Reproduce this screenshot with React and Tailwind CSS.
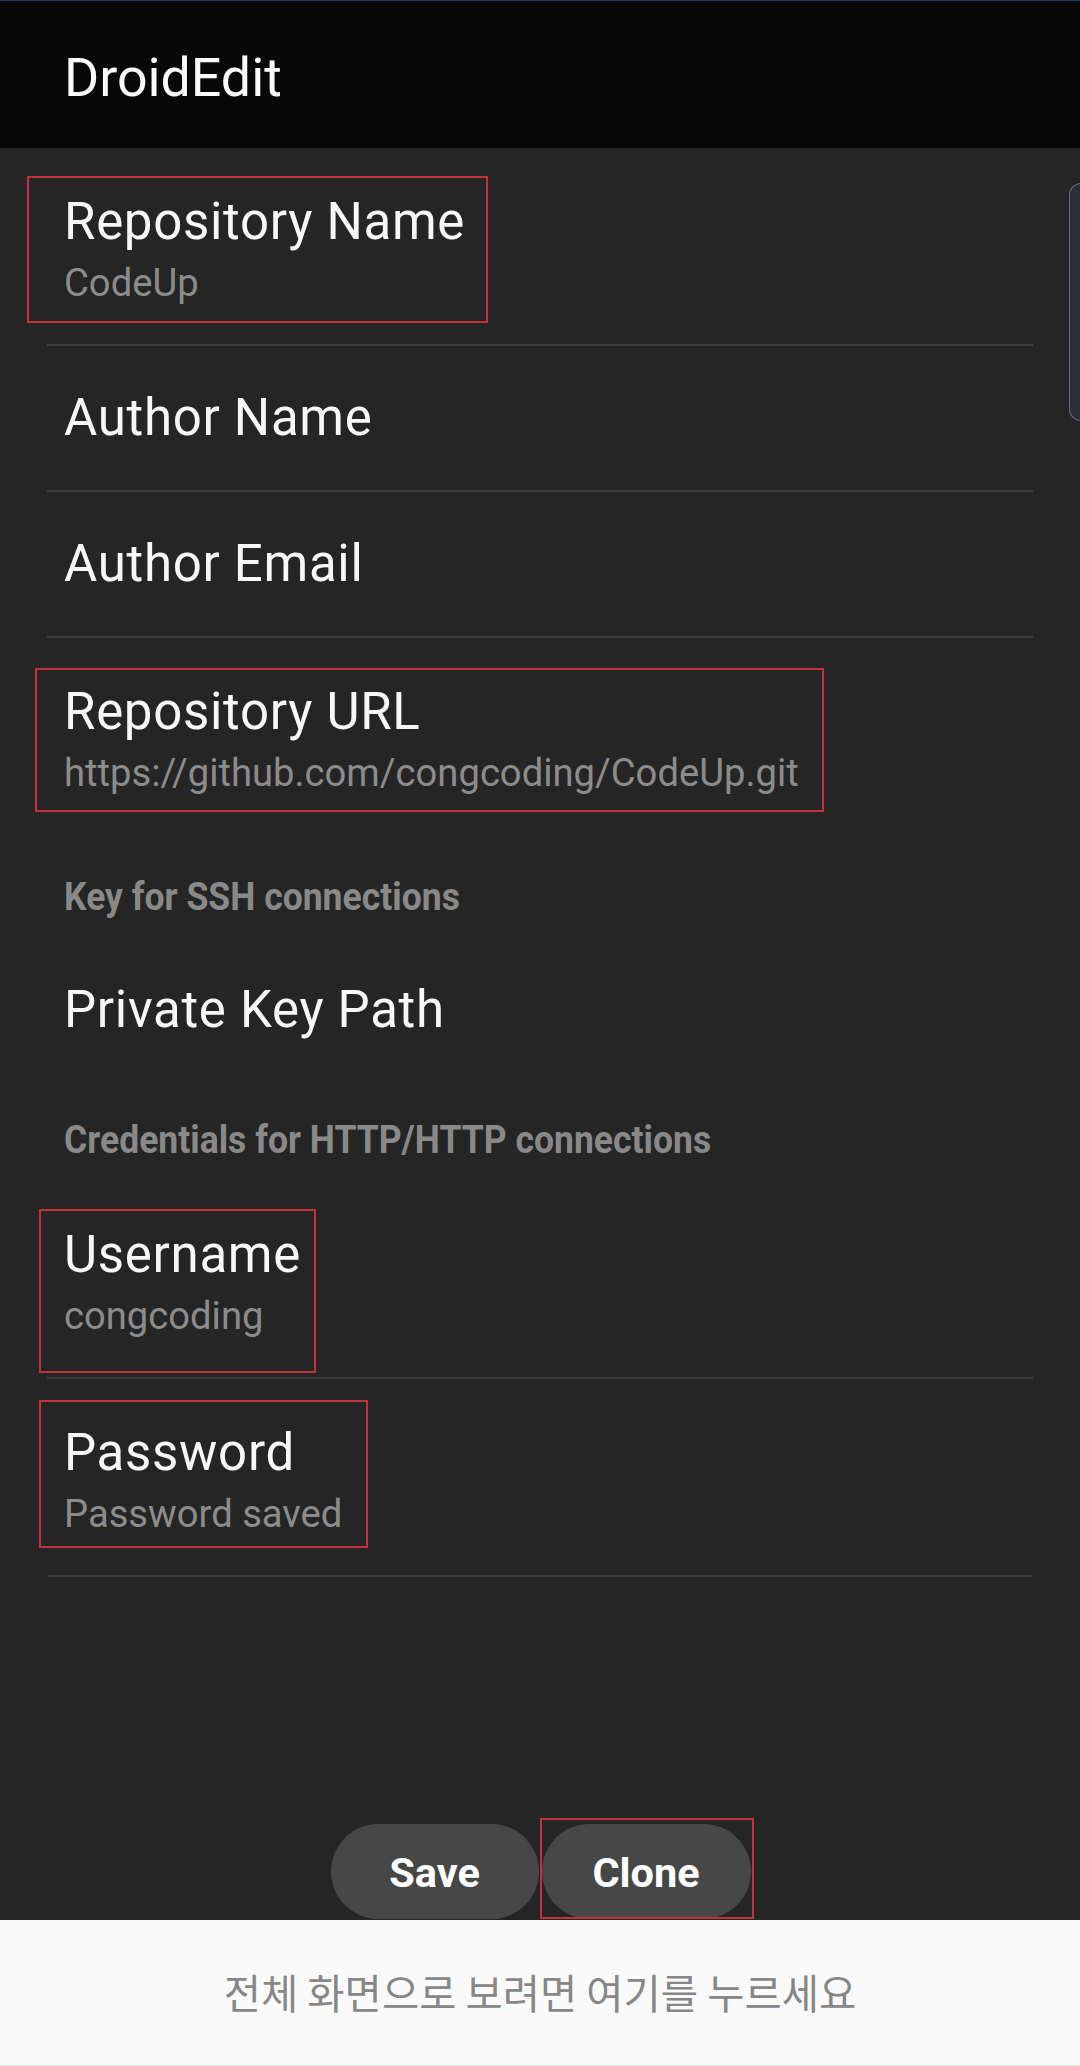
const ROBOTO = { fontFamily: 'Roboto, "Noto Sans", sans-serif' };

function Mark({ className }) {
    return <div className={`absolute border-2 border-[#c3323b] pointer-events-none ${className}`} />;
}

function Divider() {
    return <div className="mx-[47px] h-[2px] bg-[#3d3d3d]" />;
}

function Pref({ title, summary, mark, height }) {
    return (
        <div className={`relative px-[64px] ${height} ${summary ? 'pt-[45px]' : 'flex items-center'}`}>
            {mark}
            <div>
                <p className="text-[51px] leading-[58px] tracking-[0.7px] text-[#f7f7f7]">{title}</p>
                {summary && <p className="mt-[10px] text-[38.2px] leading-[45px] text-[#8c8c8c]">{summary}</p>}
            </div>
        </div>
    );
}

function Category({ label, className }) {
    return (
        <div className={`px-[64px] ${className}`}>
            <span className="inline-block origin-left scale-x-[0.923] text-[38.5px] leading-[45px] font-bold text-[#898989] whitespace-nowrap">
                {label}
            </span>
        </div>
    );
}

export default function App() {
    return (
        <div className="relative w-[1080px] h-[2066px] flex flex-col bg-[#252525] overflow-hidden" style={ROBOTO}>
            <header className="h-[148px] shrink-0 bg-[#080808] border-t border-[#213c66] pl-[64px] pt-[50px]">
                <h1 className="text-[53.7px] leading-[54px] text-[#fafafa]">DroidEdit</h1>
            </header>

            {/* scroll indicator on the right edge */}
            <div className="absolute left-[1069px] top-[183px] w-[24px] h-[238px] rounded-l-[12px] border border-r-0 border-[#6c6c78] bg-[#2e2e3b]" />

            <main className="flex-1 flex flex-col">
                <Pref
                    title="Repository Name"
                    summary="CodeUp"
                    height="h-[196px]"
                    mark={<Mark className="left-[27px] top-[28px] w-[461px] h-[147px]" />}
                />
                <Divider />
                <Pref title="Author Name" height="h-[144px]" />
                <Divider />
                <Pref title="Author Email" height="h-[144px]" />
                <Divider />
                <Pref
                    title="Repository URL"
                    summary="https://github.com/congcoding/CodeUp.git"
                    height="h-[196px]"
                    mark={<Mark className="left-[35px] top-[30px] w-[789px] h-[144px]" />}
                />
                <Category label="Key for SSH connections" className="h-[104px] pt-[40px]" />
                <Pref title="Private Key Path" height="h-[144px]" />
                <Category label="Credentials for HTTP/HTTP connections" className="h-[99px] pt-[35px]" />
                <Pref
                    title="Username"
                    summary="congcoding"
                    height="h-[196px]"
                    mark={<Mark className="left-[39px] top-[28px] w-[277px] h-[164px]" />}
                />
                <Divider />
                <Pref
                    title="Password"
                    summary="Password saved"
                    height="h-[196px]"
                    mark={<Mark className="left-[39px] top-[21px] w-[329px] h-[148px]" />}
                />
                <Divider />

                <div className="mt-auto flex justify-center gap-[3px] pb-[1px] pl-[1px]">
                    <button className="w-[208px] h-[95px] pt-[4px] rounded-full bg-[#474747] text-[41.5px] font-bold text-white">
                        Save
                    </button>
                    <div className="relative">
                        <Mark className="-left-[2px] -top-[6px] w-[214px] h-[101px]" />
                        <button className="w-[209px] h-[95px] pt-[4px] rounded-full bg-[#474747] text-[41.5px] font-bold text-white">
                            Clone
                        </button>
                    </div>
                </div>
            </main>

            <footer className="h-[146px] shrink-0 bg-[#fafafa] border-b border-[#e6e6e6] flex items-center justify-center">
                <p
                    className="text-[40.5px] text-[#878787]"
                    style={{ fontFamily: '"Noto Sans CJK KR", "Noto Sans", sans-serif' }}
                >
                    전체 화면으로 보려면 여기를 누르세요
                </p>
            </footer>
        </div>
    );
}
